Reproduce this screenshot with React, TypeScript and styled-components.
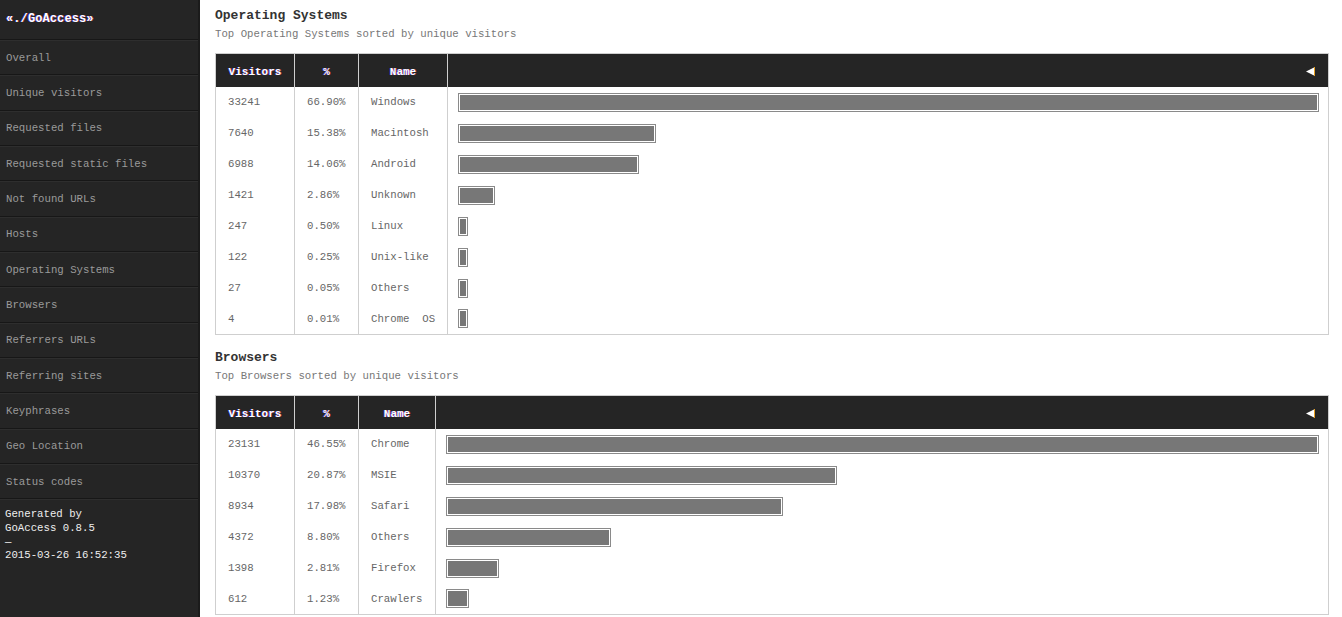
import React from "react";
import styled, { createGlobalStyle } from "styled-components";

const GlobalStyle = createGlobalStyle`
  html, body { margin: 0; padding: 0; background: #fff; }
  body { font-family: "Liberation Mono", "DejaVu Sans Mono", monospace; }
  * { box-sizing: border-box; }
`;

const Page = styled.div`
  display: flex;
  min-height: 100vh;
`;

const Sidebar = styled.nav`
  width: 200px;
  flex: 0 0 200px;
  background: #252525;
  border-right: 2px solid #1b1b1b;
  display: flex;
  flex-direction: column;
`;

const Brand = styled.div`
  height: 40px;
  padding: 0 6px 2px;
  display: flex;
  align-items: center;
  color: #fff;
  font-weight: bold;
  font-size: 12px;
  letter-spacing: 0.1px;
  border-bottom: 1px solid #171717;
  text-shadow: -0.6px 0 0 rgba(60, 60, 255, 0.8), 0.6px 0 0 rgba(255, 60, 60, 0.6);
`;

const NavItem = styled.div`
  height: 35.33px;
  padding: 0 6px;
  display: flex;
  align-items: center;
  color: #9a9a9a;
  font-size: 10.7px;
  border-top: 1px solid #2e2e2e;
  border-bottom: 1px solid #171717;
`;

const Footer = styled.div`
  padding: 8px 5px;
  color: #eee;
  font-size: 10.7px;
  line-height: 13.7px;
  border-top: 1px solid #2e2e2e;
`;

const Main = styled.main`
  flex: 1;
  padding: 7px 13px 0 15px;
  min-width: 0;
`;

const Section = styled.section`
  margin-bottom: 14px;
`;

const Title = styled.h2`
  margin: 0;
  font-size: 13px;
  line-height: 18px;
  font-weight: bold;
  color: #333;
`;

const Subtitle = styled.div`
  font-size: 10.7px;
  line-height: 18px;
  color: #777;
`;

const Table = styled.table`
  margin-top: 10px;
  width: 100%;
  border-collapse: collapse;
  table-layout: fixed;
  border: 1px solid #cfcfcf;
`;

const HeadCell = styled.th`
  background: #252525;
  color: #fff;
  height: 33px;
  padding: 3px 0 0;
  font-size: 11px;
  font-weight: bold;
  text-align: center;
  border-left: 1px solid #cfcfcf;
  border-right: 1px solid #cfcfcf;
  text-shadow: -0.6px 0 0 rgba(60, 60, 255, 0.8), 0.6px 0 0 rgba(255, 60, 60, 0.6);
`;

const ArrowCell = styled(HeadCell)`
  text-align: right;
  padding-right: 13px;
`;

const Cell = styled.td`
  height: 31px;
  padding: 0 0 0 12px;
  font-size: 10.7px;
  color: #666;
  white-space: pre;
  border-left: 1px solid #cfcfcf;
  border-right: 1px solid #cfcfcf;
`;

const BarCell = styled.td`
  height: 31px;
  padding: 0 9px 0 10px;
  border-left: 1px solid #cfcfcf;
`;

const Bar = styled.div`
  height: 19px;
  min-width: 10px;
  background: #777;
  border: 1px solid #8a8a8a;
  box-shadow: inset 0 0 0 1px #fff;
`;

type Row = { visitors: string; pct: number; name: string };

const osRows: Row[] = [
  { visitors: "33241", pct: 66.9, name: "Windows" },
  { visitors: "7640", pct: 15.38, name: "Macintosh" },
  { visitors: "6988", pct: 14.06, name: "Android" },
  { visitors: "1421", pct: 2.86, name: "Unknown" },
  { visitors: "247", pct: 0.5, name: "Linux" },
  { visitors: "122", pct: 0.25, name: "Unix-like" },
  { visitors: "27", pct: 0.05, name: "Others" },
  { visitors: "4", pct: 0.01, name: "Chrome  OS" },
];

const browserRows: Row[] = [
  { visitors: "23131", pct: 46.55, name: "Chrome" },
  { visitors: "10370", pct: 20.87, name: "MSIE" },
  { visitors: "8934", pct: 17.98, name: "Safari" },
  { visitors: "4372", pct: 8.8, name: "Others" },
  { visitors: "1398", pct: 2.81, name: "Firefox" },
  { visitors: "612", pct: 1.23, name: "Crawlers" },
];

const Arrow = () => (
  <svg width="9" height="9" viewBox="0 0 9 9" style={{ verticalAlign: "-1px" }}>
    <polygon points="9,0 9,9 0,4.5" fill="#fff" />
    <line x1="8.5" y1="0" x2="8.5" y2="9" stroke="#e8a020" strokeWidth="1" />
  </svg>
);

const DataTable = ({ rows, nameWidth }: { rows: Row[]; nameWidth: number }) => {
  const max = Math.max(...rows.map((r) => r.pct));
  return (
    <Table>
      <colgroup>
        <col style={{ width: 79 }} />
        <col style={{ width: 64 }} />
        <col style={{ width: nameWidth }} />
        <col />
      </colgroup>
      <thead>
        <tr>
          <HeadCell>Visitors</HeadCell>
          <HeadCell>%</HeadCell>
          <HeadCell>Name</HeadCell>
          <ArrowCell>
            <Arrow />
          </ArrowCell>
        </tr>
      </thead>
      <tbody>
        {rows.map((r) => (
          <tr key={r.name}>
            <Cell>{r.visitors}</Cell>
            <Cell>{r.pct.toFixed(2)}%</Cell>
            <Cell>{r.name}</Cell>
            <BarCell>
              <Bar style={{ width: `${(r.pct / max) * 100}%` }} />
            </BarCell>
          </tr>
        ))}
      </tbody>
    </Table>
  );
};

const navItems = [
  "Overall",
  "Unique visitors",
  "Requested files",
  "Requested static files",
  "Not found URLs",
  "Hosts",
  "Operating Systems",
  "Browsers",
  "Referrers URLs",
  "Referring sites",
  "Keyphrases",
  "Geo Location",
  "Status codes",
];

export default function App() {
  return (
    <>
      <GlobalStyle />
      <Page>
        <Sidebar>
          <Brand>«./GoAccess»</Brand>
          {navItems.map((n) => (
            <NavItem key={n}>{n}</NavItem>
          ))}
          <Footer>
            Generated by
            <br />
            GoAccess 0.8.5
            <br />—<br />
            2015-03-26 16:52:35
          </Footer>
        </Sidebar>
        <Main>
          <Section>
            <Title>Operating Systems</Title>
            <Subtitle>Top Operating Systems sorted by unique visitors</Subtitle>
            <DataTable rows={osRows} nameWidth={89} />
          </Section>
          <Section>
            <Title>Browsers</Title>
            <Subtitle>Top Browsers sorted by unique visitors</Subtitle>
            <DataTable rows={browserRows} nameWidth={77} />
          </Section>
        </Main>
      </Page>
    </>
  );
}
